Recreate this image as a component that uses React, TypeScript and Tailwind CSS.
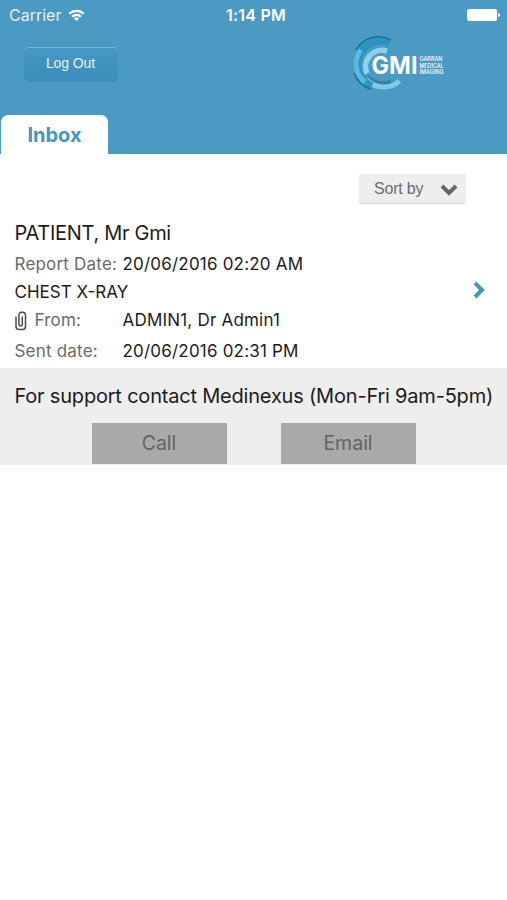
import type { ReactNode } from "react";

function StatusBar() {
  return (
    <div className="grid h-[30px] grid-cols-3 items-center pr-[7px] pl-[9px] text-white">
      <div className="flex items-center gap-[7px]">
        <span className="text-base text-[#e6f1f7]">Carrier</span>
        <svg width="17" height="13" viewBox="0 0 18 14" fill="none" stroke="currentColor" strokeWidth="2.4">
          <path d="M1.2 5.2a11 11 0 0 1 15.6 0" />
          <path d="M4.2 8.4a6.800 6.800 0 0 1 9.600 0" />
          <path d="M9 13.200 6.100 10.300a4.100 4.100 0 0 1 5.800 0Z" fill="currentColor" stroke="none" />
        </svg>
      </div>
      <div className="pl-[3px] text-center text-base font-semibold tracking-[0.2px] whitespace-nowrap">
        1:14 PM
      </div>
      <div className="flex items-center justify-end gap-px">
        <div className="h-3 w-[30px] rounded-[2px] bg-white" />
        <div className="h-1 w-[2px] rounded-r-full bg-white" />
      </div>
    </div>
  );
}

function Logo() {
  return (
    <svg width="96" height="60" viewBox="350 34 96 60" fill="none">
      {/* bottom swoosh and its shadow */}
      <path d="M367 77A21 21 0 0 0 391 82" stroke="#2f82ab" strokeWidth="5" />
      <path d="M366 79A23.500 23.500 0 0 0 399.500 81" stroke="#83c8e6" strokeWidth="5" />
      {/* outer ring */}
      <path d="M389.500 42.500A22.800 22.800 0 1 0 372 86" stroke="#2c94c2" strokeWidth="7.500" />
      <path d="M391 39.800A26 26 0 0 0 356 50" stroke="#1f6f96" strokeWidth="1.500" />
      <path d="M354 73A26.500 26.500 0 0 0 371.500 89.500" stroke="#1f6f96" strokeWidth="1.500" />
      <path d="M361 50A22.500 22.500 0 0 0 365 82" stroke="#5cb8e0" strokeWidth="5" />
      {/* inner ring */}
      <path d="M388 53A15.500 15.500 0 0 0 369 73.500" stroke="#4a9fc8" strokeWidth="5" />
      <path d="M387 51A16.500 16.500 0 0 0 367 73.500" stroke="#93cfea" strokeWidth="5.500" />
      <g fill="#fff" fontFamily="Inter, sans-serif">
        <text x="371.500" y="74.200" fontSize="24" fontWeight="700" textLength="46" lengthAdjust="spacingAndGlyphs">
          GMI
        </text>
        <g fontSize="5.500" fontWeight="500">
          <text x="419.500" y="60.700" textLength="23" lengthAdjust="spacingAndGlyphs">GARRAN</text>
          <text x="419.500" y="67.500" textLength="24" lengthAdjust="spacingAndGlyphs">MEDICAL</text>
          <text x="419.500" y="74.200" textLength="24" lengthAdjust="spacingAndGlyphs">IMAGING</text>
        </g>
      </g>
    </svg>
  );
}

function PaperclipIcon() {
  return (
    <svg width="12" height="20" viewBox="0 0 12 20" fill="none" stroke="#4c4c4c" strokeWidth="1.500" strokeLinecap="round">
      <path d="M1 6v9.500a3 3 0 0 0 3 3h3.500a3 3 0 0 0 3-3V4a2.800 2.800 0 0 0-2.800-2.800h-1A2.800 2.800 0 0 0 3.900 4v9.300a1.700 1.700 0 0 0 3.400 0V6" />
    </svg>
  );
}

interface ReportRowProps {
  label: ReactNode;
  children: ReactNode;
  className: string;
}

function ReportRow({ label, children, className }: ReportRowProps) {
  return (
    <div className={`flex items-center tracking-[0.2px] whitespace-nowrap ${className}`}>
      <div className="flex w-[108px] shrink-0 items-center text-[#6a6a6a]">{label}</div>
      <div>{children}</div>
    </div>
  );
}

function SupportButton({ children }: { children: ReactNode }) {
  return (
    <button className="h-[41px] w-[135px] bg-[#a9a9a9] pt-px text-[19.500px] text-[#636363]">
      {children}
    </button>
  );
}

export default function App() {
  return (
    <div className="min-h-[900px] w-[507px] overflow-hidden bg-white font-['Inter',sans-serif] text-[#1c1c1c]">
      <header className="flex h-[154px] flex-col bg-[#4b9ac4]">
        <StatusBar />
        <div className="flex flex-1 items-start justify-between pt-1 pr-[61px] pl-6">
          <button className="mt-[13px] h-[35px] w-[94px] rounded-[5px] border-t border-[#75b6d6] bg-linear-to-b from-[#4697c3] to-[#3c8fba] pr-px pb-[5px] font-['Liberation_Sans',sans-serif] text-sm tracking-[-0.1px] text-[#e4f2f9]">
            Log Out
          </button>
          <Logo />
        </div>
        <div className="ml-px flex h-[39px] w-[107px] items-center justify-center rounded-t-[7px] bg-white text-xl font-bold text-[#4496bf]">
          Inbox
        </div>
      </header>

      <main>
        <div className="flex justify-end pt-5 pr-[41px]">
          <button className="flex h-[30px] w-[107px] items-center justify-between rounded-[2px] border-b border-[#d5d5d5] bg-[#eee] pr-2 pl-[15px] font-['Liberation_Sans',sans-serif] text-base tracking-[-0.2px] text-[#6c6c6c]">
            Sort by
            <svg width="18" height="12" viewBox="0 0 18 12" fill="none" stroke="#666" strokeWidth="4" className="mt-[2px]">
              <path d="m2 2 7 7 7-7" />
            </svg>
          </button>
        </div>

        <section className="mt-[14px] flex items-center justify-between pr-[21px] pl-[14.500px]">
          <div className="text-[17px]">
            <div className="h-8 text-xl leading-[30px] tracking-[-0.3px]">PATIENT, Mr Gmi</div>
            <ReportRow className="h-[29px]" label="Report Date:">
              20/06/2016 02:20 AM
            </ReportRow>
            <div className="h-[27px] leading-[27px]">CHEST X-RAY</div>
            <ReportRow
              className="h-[30px]"
              label={
                <>
                  <PaperclipIcon />
                  <span className="ml-[8px]">From:</span>
                </>
              }
            >
              ADMIN1, Dr Admin1
            </ReportRow>
            <ReportRow className="h-8" label="Sent date:">
              20/06/2016 02:31 PM
            </ReportRow>
          </div>
          <svg width="13" height="18" viewBox="0 0 13 18" fill="none" stroke="#4396bd" strokeWidth="4" className="mb-[6px]">
            <path d="m2 2 7 7-7 7" />
          </svg>
        </section>

        <footer className="h-[97px] bg-[#eee] pt-[13px]">
          <div className="pl-[14.500px] text-[20px] leading-[31px] tracking-[-0.2px] whitespace-nowrap">
            For support contact Medinexus (Mon-Fri 9am-5pm)
          </div>
          <div className="mt-[11px] flex justify-center gap-[54px]">
            <SupportButton>Call</SupportButton>
            <SupportButton>Email</SupportButton>
          </div>
        </footer>
      </main>
    </div>
  );
}
